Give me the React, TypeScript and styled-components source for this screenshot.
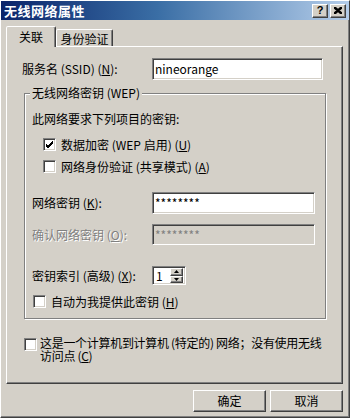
import styled, { createGlobalStyle } from 'styled-components'

const GlobalStyle = createGlobalStyle`
  html, body {
    margin: 0;
    padding: 0;
    background: #d4d0c8;
  }
  body {
    font-family: "Noto Sans CJK SC", "Liberation Sans", sans-serif;
    font-size: 12px;
    color: #000;
  }
  * {
    box-sizing: border-box;
  }
`

const Check = ({ checked }: { checked?: boolean }) => (
  <StyledCheckBox>
    {checked && (
      <svg width='9' height='9' viewBox='0 0 9 9'>
        <path d='M1 4 L3 6 L8 1 M1 5 L3 7 L8 2 M1 6 L3 8 L8 3' stroke='#000' strokeWidth='1' fill='none' />
      </svg>
    )}
  </StyledCheckBox>
)

const Arrow = ({ up }: { up?: boolean }) => (
  <svg width='5' height='3' viewBox='0 0 5 3'>
    <path d={up ? 'M2.5 0 L5 3 L0 3 Z' : 'M0 0 L5 0 L2.5 3 Z'} fill='#000' />
  </svg>
)

const App = () => {
  return (
    <>
      <GlobalStyle />
      <StyledWindow>
        <StyledTitleBar>
          <StyledTitle>无线网络属性</StyledTitle>
          <StyledTitleButtons>
            <StyledTitleButton>?</StyledTitleButton>
            <StyledTitleButton>
              <svg width='8' height='7' viewBox='0 0 8 7'>
                <path d='M0 0 L8 7 M1 0 L8 6 M0 1 L7 7 M8 0 L0 7 M7 0 L0 6 M8 1 L1 7' stroke='#000' strokeWidth='1.2' />
              </svg>
            </StyledTitleButton>
          </StyledTitleButtons>
        </StyledTitleBar>

        <StyledBody>
          <StyledTabStrip>
            <StyledTab active>关联</StyledTab>
            <StyledTab>身份验证</StyledTab>
          </StyledTabStrip>

          <StyledPanel>
            <StyledFieldRow labelWidth={130}>
              <label>
                服务名 (SSID) (<u>N</u>):
              </label>
              <StyledTextBox width={171}>nineorange</StyledTextBox>
            </StyledFieldRow>

            <StyledGroup>
              <legend>无线网络密钥 (WEP)</legend>
              <StyledDescription>此网络要求下列项目的密钥:</StyledDescription>

              <StyledCheckList>
                <StyledCheckRow>
                  <Check checked />
                  <span>
                    数据加密 (WEP 启用) (<u>U</u>)
                  </span>
                </StyledCheckRow>
                <StyledCheckRow>
                  <Check />
                  <span>
                    网络身份验证 (共享模式) (<u>A</u>)
                  </span>
                </StyledCheckRow>
              </StyledCheckList>

              <StyledFieldRow labelWidth={120} top={19}>
                <label>
                  网络密钥 (<u>K</u>):
                </label>
                <StyledTextBox width={163}>********</StyledTextBox>
              </StyledFieldRow>

              <StyledFieldRow labelWidth={120} top={10} disabled>
                <label>
                  确认网络密钥 (<u>O</u>):
                </label>
                <StyledTextBox width={163} height={21} disabled>
                  ********
                </StyledTextBox>
              </StyledFieldRow>

              <StyledFieldRow labelWidth={120} top={21}>
                <label>
                  密钥索引 (高级) (<u>X</u>):
                </label>
                <StyledSpinner>
                  <span>1</span>
                  <StyledSpinButtons>
                    <StyledSpinButton>
                      <Arrow up />
                    </StyledSpinButton>
                    <StyledSpinButton>
                      <Arrow />
                    </StyledSpinButton>
                  </StyledSpinButtons>
                </StyledSpinner>
              </StyledFieldRow>

              <StyledAutoRow>
                <Check />
                <span>
                  自动为我提供此密钥 (<u>H</u>)
                </span>
              </StyledAutoRow>
            </StyledGroup>

            <StyledAdHocRow>
              <Check />
              <StyledAdHocText>
                <span>这是一个计算机到计算机 (特定的) 网络；没有使用无线</span>
                <span>
                  访问点 (<u>C</u>)
                </span>
              </StyledAdHocText>
            </StyledAdHocRow>
          </StyledPanel>

          <StyledFooter>
            <StyledButton>确定</StyledButton>
            <StyledButton>取消</StyledButton>
          </StyledFooter>
        </StyledBody>
      </StyledWindow>
    </>
  )
}

export default App

const StyledWindow = styled.div`
  width: 350px;
  height: 418px;
  background: #d4d0c8;
  border: 1px solid;
  border-color: #fff #404040 #404040 #fff;
  box-shadow: inset -1px -1px 0 #808080;
  overflow: hidden;
`

const StyledTitleBar = styled.div`
  height: 19px;
  display: flex;
  align-items: center;
  justify-content: space-between;
  padding: 0 3px 0 3px;
  background: linear-gradient(to right, #0a246a 0%, #3a6ea5 45%, #b4cdea 100%);
`

const StyledTitle = styled.div`
  color: #fff;
  font-weight: 700;
  font-size: 13px;
  line-height: 15px;
  letter-spacing: 0.5px;
`

const StyledTitleButtons = styled.div`
  display: flex;
  gap: 2px;
`

const StyledTitleButton = styled.div`
  width: 16px;
  height: 14px;
  display: flex;
  align-items: center;
  justify-content: center;
  background: #d4d0c8;
  border: 1px solid;
  border-color: #fff #404040 #404040 #fff;
  box-shadow: inset -1px -1px 0 #808080;
  font-family: "Liberation Sans", sans-serif;
  font-weight: 700;
  font-size: 11px;
  line-height: 11px;
`

const StyledBody = styled.div`
  padding: 6px 5px 0 5px;
`

const StyledTabStrip = styled.div`
  position: relative;
  z-index: 1;
  display: flex;
  align-items: flex-end;
  height: 21px;
  margin-bottom: -1px;
`

const StyledTab = styled.div<{ active?: boolean }>`
  display: flex;
  align-items: center;
  justify-content: center;
  background: #d4d0c8;
  border: 1px solid;
  border-bottom: none;
  border-color: #fff #404040 transparent #fff;
  border-radius: 2px 2px 0 0;
  box-shadow: inset -1px 0 0 #808080;
  width: ${({ active }) => (active ? '50px' : '57px')};
  height: ${({ active }) => (active ? '21px' : '17px')};
  margin-bottom: ${({ active }) => (active ? '0' : '1px')};
  padding-top: ${({ active }) => (active ? '0' : '1px')};
  line-height: 14px;
`

const StyledPanel = styled.div`
  width: 337px;
  height: 338px;
  border: 1px solid;
  border-color: #fff #404040 #404040 #fff;
  box-shadow: inset -1px -1px 0 #808080;
  padding: 11px 0 0 15px;
`

const StyledFieldRow = styled.div<{ labelWidth: number; top?: number; disabled?: boolean }>`
  display: flex;
  align-items: center;
  margin-top: ${({ top }) => top || 0}px;
  line-height: 14px;

  label {
    width: ${({ labelWidth }) => labelWidth}px;
    flex-shrink: 0;
    color: ${({ disabled }) => (disabled ? '#808080' : '#000')};
    text-shadow: ${({ disabled }) => (disabled ? '1px 1px 0 #fff' : 'none')};
  }
`

const StyledTextBox = styled.div<{ width: number; height?: number; disabled?: boolean }>`
  width: ${({ width }) => width}px;
  height: ${({ height }) => height || 22}px;
  display: flex;
  align-items: center;
  padding-left: 2px;
  background: ${({ disabled }) => (disabled ? '#d4d0c8' : '#fff')};
  color: ${({ disabled }) => (disabled ? '#808080' : '#000')};
  border: 1px solid;
  border-color: #808080 #fff #fff #808080;
  box-shadow: inset 1px 1px 0 #404040, inset -1px -1px 0 #d4d0c8;
  line-height: 14px;
`

const StyledGroup = styled.fieldset`
  width: 302px;
  margin: 6px 0 0 2px;
  padding: 0 0 10px 7px;
  border: 1px solid #808080;
  box-shadow: inset 1px 1px 0 #fff, 1px 1px 0 #fff;
  min-inline-size: 0;

  legend {
    padding: 0 2px;
    margin-left: -2px;
    line-height: 14px;
    background: #d4d0c8;
  }
`

const StyledDescription = styled.div`
  margin-top: 12px;
  line-height: 14px;
`

const StyledCheckList = styled.div`
  display: flex;
  flex-direction: column;
  gap: 9px;
  margin-top: 12px;
  padding-left: 11px;
`

const StyledCheckRow = styled.div`
  display: flex;
  align-items: center;
  gap: 5px;
  height: 13px;
  line-height: 14px;
`

const StyledCheckBox = styled.span`
  width: 13px;
  height: 13px;
  flex-shrink: 0;
  display: inline-flex;
  align-items: center;
  justify-content: center;
  background: #fff;
  border: 1px solid;
  border-color: #808080 #fff #fff #808080;
  box-shadow: inset 1px 1px 0 #404040, inset -1px -1px 0 #d4d0c8;
`

const StyledSpinner = styled.div`
  width: 34px;
  height: 19px;
  display: flex;
  align-items: center;
  justify-content: space-between;
  padding: 2px 2px 2px 3px;
  background: #fff;
  border: 1px solid;
  border-color: #808080 #fff #fff #808080;
  box-shadow: inset 1px 1px 0 #404040, inset -1px -1px 0 #d4d0c8;
  line-height: 14px;
`

const StyledSpinButtons = styled.div`
  display: flex;
  flex-direction: column;
  height: 15px;
`

const StyledSpinButton = styled.div`
  width: 13px;
  height: 7.5px;
  display: flex;
  align-items: center;
  justify-content: center;
  background: #d4d0c8;
  border: 1px solid;
  border-color: #fff #404040 #404040 #fff;
  box-shadow: inset -1px -1px 0 #808080;
`

const StyledAutoRow = styled(StyledCheckRow)`
  margin-top: 10px;
  padding-left: 1px;
`

const StyledAdHocRow = styled.div`
  display: flex;
  align-items: flex-start;
  gap: 3px;
  margin: 19px 0 0 2px;
`

const StyledAdHocText = styled.div`
  display: flex;
  flex-direction: column;
  margin-top: -2px;
  line-height: 13px;
  white-space: nowrap;
  letter-spacing: -0.3px;
`

const StyledFooter = styled.div`
  width: 337px;
  display: flex;
  justify-content: flex-end;
  gap: 4px;
  margin-top: 6px;
`

const StyledButton = styled.button`
  width: 73px;
  height: 22px;
  padding: 0;
  font-family: inherit;
  font-size: 12px;
  line-height: 14px;
  color: #000;
  background: #d4d0c8;
  border: 1px solid;
  border-color: #fff #404040 #404040 #fff;
  box-shadow: inset -1px -1px 0 #808080;
`
